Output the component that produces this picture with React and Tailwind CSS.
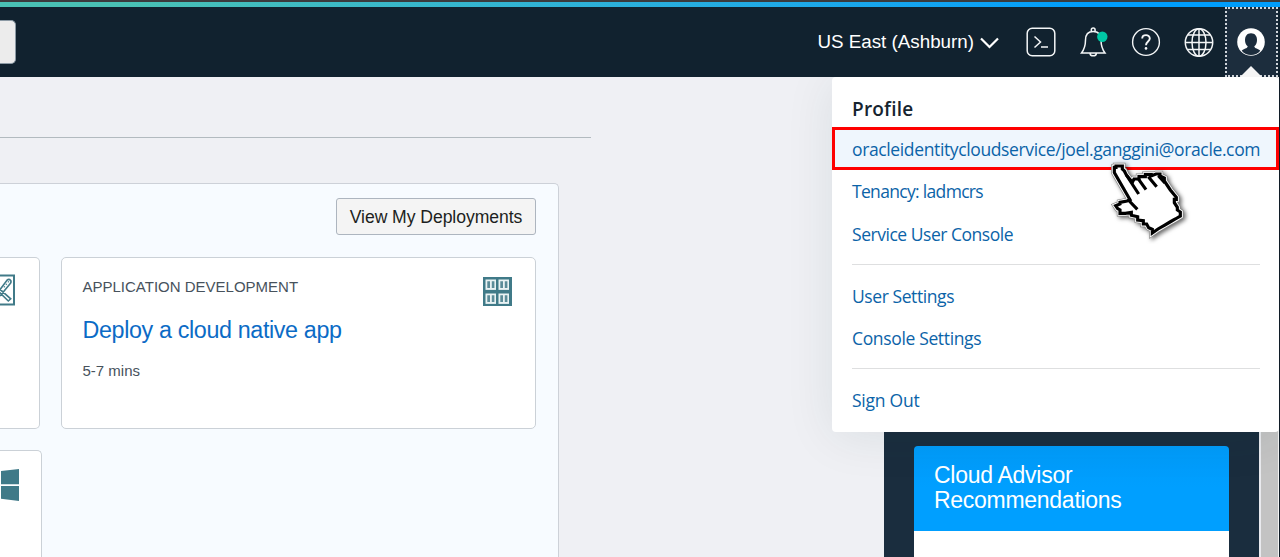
import React from "react";

const links = "flex items-center whitespace-nowrap px-5 text-[17.5px] text-[#0b63a8]";

function Header() {
  return (
    <header className="flex h-[77px] flex-col">
      <div className="h-[2px] bg-[#3b3b3d]" />
      <div className="h-[5px] bg-linear-to-r from-[#49c1b4] from-10% via-[#2aafdc] via-50% to-[#009dfb] to-85%" />
      <div className="flex h-[70px] items-center bg-[#11222f]">
        <div className="h-11 w-4 rounded-r-[5px] border border-l-0 border-[#8c9aa5] bg-[#ececec]" />
        <div className="ml-auto flex h-full items-center">
          <span className="whitespace-nowrap text-[18.8px] leading-none text-white">US East (Ashburn)</span>
          <svg className="ml-[6px] mt-[2px] h-3 w-[19px]" viewBox="0 0 19 12" fill="none" stroke="#fff" strokeWidth="2.2">
            <path d="M1 1.5L9.5 10L18 1.5" />
          </svg>
          <svg className="ml-[27px] h-[30px] w-[30px]" viewBox="0 0 30 30" fill="none" stroke="#f4f6f7" strokeWidth="1.5">
            <rect x="1.2" y="1.2" width="27.6" height="27.6" rx="5" />
            <path d="M8.5 9.5L14.5 15L8.5 20.5M15 20H22" />
          </svg>
          <svg className="ml-[24px] h-[30px] w-[28px]" viewBox="0 0 28 30" fill="none" stroke="#f4f6f7" strokeWidth="1.5">
            <path d="M11.3 4.2V3A1.9 1.9 0 0 1 15.1 3V4.2M1.5 26H25C22 22 21 19 21 13C21 7.5 18.5 4.5 13.2 4.5C8 4.5 5.5 7.5 5.5 13C5.5 19 4.5 22 1.5 26ZM10 26.3C10.4 29.7 16 29.7 16.4 26.3" />
            <circle cx="22.3" cy="9.8" r="5.2" fill="#00c7a5" stroke="none" />
          </svg>
          <svg className="ml-[23px] h-[30px] w-[30px]" viewBox="0 0 30 30" fill="none" stroke="#f4f6f7" strokeWidth="1.4">
            <circle cx="15" cy="15" r="13.4" />
            <path strokeWidth="1.9" d="M11.2 11.5C11.2 7 18.8 7 18.8 11.4C18.8 14.4 15 14.6 15 18.2" />
            <circle cx="15" cy="21.4" r="1.3" fill="#f4f6f7" stroke="none" />
          </svg>
          <svg className="ml-[23px] h-[30px] w-[30px]" viewBox="0 0 30 30" fill="none" stroke="#f4f6f7" strokeWidth="1.5">
            <circle cx="15" cy="15.5" r="13.7" />
            <ellipse cx="15" cy="15.5" rx="7" ry="13.7" />
            <path d="M15 1.8V29.2M1.3 15.5H28.7M3.8 8H26.2M3.8 22.5H26.2" />
          </svg>
          <div className="ml-[11px] flex h-full w-[53px] items-center justify-center border-2 border-dotted border-[#d0d5da] bg-[#1c2d3d] pr-px">
            <svg className="h-7 w-7" viewBox="0 0 28 28">
              <circle cx="14" cy="14" r="13.8" fill="#fff" />
              <path d="M14 5.2C18 5.2 20 8.1 20 12C20 14.8 19 17 17.3 18.3C17.5 20.8 21.5 20.6 23.3 22.7C20.8 25.6 17.7 27 14 27C10.3 27 7.2 25.6 4.7 22.7C6.5 20.6 10.5 20.8 10.7 18.3C9 17 8 14.8 8 12C8 8.1 10 5.2 14 5.2Z" fill="#1c2d3d" />
            </svg>
          </div>
          <div className="w-[2px]" />
        </div>
      </div>
    </header>
  );
}

function DesignIcon() {
  return (
    <svg className="h-8 w-[15px]" viewBox="0 0 15 32" fill="none" stroke="#407a88">
      <path strokeWidth="2" d="M0 1.5H14V30.5H0" />
      <path strokeWidth="1.6" d="M-1 17L7 6.2Q9 4.5 10.7 6.5Q11.5 8 10.3 9.4L0 22M-1 14.5L10.7 24.8L8.3 27L-1 18M8 7.5L8.8 8.2M6 10L6.8 10.7M4 12.5L4.8 13.2" />
    </svg>
  );
}

function WindowsIcon() {
  return (
    <svg className="h-8 w-[19px]" viewBox="0 0 19 32" fill="#407a88">
      <path d="M1 2L19 0V15.2H1ZM1 17H19V32L1 29.7Z" />
    </svg>
  );
}

function ContainersIcon() {
  const cells = [[3, 3], [16, 3], [3, 17], [16, 17]];
  return (
    <svg className="h-[29px] w-[29px]" viewBox="0 0 29 29">
      <path d="M0 0H29V29H0Z" fill="#407a88" />
      {cells.map(([x, y]) => (
        <g key={x + "-" + y} transform={"translate(" + x + " " + y + ")"}>
          <path d="M-.5 -.5H10V9.9H-.5Z" fill="#e9f2f3" />
          <path d="M1.3 1.3H4V8H1.3ZM5.8 1.3H8.4V8H5.8Z" fill="#5b8c98" />
        </g>
      ))}
    </svg>
  );
}

function Deployments() {
  return (
    <section className="h-[374px] w-[559px] rounded-tr-[5px] border-t border-r border-[#cdd1d8] bg-[#f7fbff] pt-[14px]">
      <div className="flex justify-end pr-[22px]">
        <button className="h-[37px] w-[200px] whitespace-nowrap rounded-[3px] border border-[#adb5bf] bg-[#f4f4f4] pt-[2px] text-[17.6px] leading-none tracking-[-0.06px] text-[#1d1f21]">
          View My Deployments
        </button>
      </div>
      <div className="mt-[22px] flex gap-[21px]">
        <div className="flex h-[172px] w-10 justify-start rounded-r-[5px] border border-l-0 border-[#cbd1d7] bg-white pt-4">
          <DesignIcon />
        </div>
        <article className="flex h-[172px] w-[475px] justify-between rounded-[5px] border border-[#cbd1d7] bg-white pt-[19px] pr-[23px] pl-[20.5px]">
          <div className="whitespace-nowrap">
            <p className="text-[15px] leading-[20px] text-[#47525c]">APPLICATION DEVELOPMENT</p>
            <h3 className="mt-[18px] text-[23.3px] leading-[30px] tracking-[-0.36px] text-[#0b6bc6]">Deploy a cloud native app</h3>
            <p className="mt-[16px] text-[15px] leading-[20px] text-[#47525c]">5-7 mins</p>
          </div>
          <ContainersIcon />
        </article>
      </div>
      <div className="mt-[21px] h-[108px] w-[42px] rounded-tr-[5px] border-t border-r border-[#cbd1d7] bg-white pt-[18px]">
        <WindowsIcon />
      </div>
    </section>
  );
}

function Advisor() {
  return (
    <aside className="flex h-full w-[396px]">
      <div className="flex w-[375px] flex-col bg-[#1a2d3e] px-[30px] pt-[369px]">
        <div className="h-[85px] rounded-t-[4px] bg-linear-to-b from-[#009bf9] to-[#009fff] to-50% pt-[17px] pl-5 text-[23px] leading-[25px] tracking-[-0.28px] text-white">
          Cloud Advisor
          <br />
          Recommendations
        </div>
        <div className="flex-1 bg-white" />
      </div>
      <div className="w-[2px] bg-[#e9eaee]" />
      <div className="w-[17px] bg-[#c3c3c3]" />
      <div className="w-px bg-[#f4f4f4]" />
      <div className="w-px bg-[#101c27]" />
    </aside>
  );
}

function PointerHand() {
  const outline =
    "M193 147V142H198V138H217V147L223 153L229 165L247 187L252 177H267V170H286V164H303V168L318 162H330V168L343 174V183L355 201L361 210L379 232V238H373V248L382 262V270L391 276V288L376 297L360 306L343 316L324 327L307 339V328L296 323L290 312H280V302L263 300V290L244 286V277L226 280H210V270L203 266L197 257L210 252V247L231 243L240 239L193 158Z";
  return (
    <svg className="absolute top-[160px] left-[1108px] h-[84px] w-[84px]" viewBox="174 120 252 252" strokeLinejoin="miter">
      <g style={{ filter: "drop-shadow(6px 5px 6px rgba(0,0,0,.6))" }}>
        <path d={outline} fill="#fff" stroke="#8a8a8a" strokeWidth="19" />
        <path d={outline} fill="#fff" stroke="#fff" strokeWidth="15" />
        <path d={outline} fill="#fff" stroke="#000" strokeWidth="9.5" />
      </g>
      <path d="M235 240L262 268M229 165L266 222M266 178L288 209M295 170L320 200M325 167L345 189" fill="none" stroke="#000" strokeWidth="9.5" />
    </svg>
  );
}

function ProfileMenu() {
  return (
    <>
      <svg className="absolute top-[66px] left-[1240px] h-[11px] w-[22px]" viewBox="0 0 22 11">
        <path d="M0 11L11 0L22 11Z" fill="#f5f5f5" />
      </svg>
      <nav className="absolute top-[77px] left-[832px] h-[355px] w-[447px] rounded-[4px] bg-white pt-[12px] font-['Open_Sans',sans-serif] shadow-[0_4px_50px_rgba(26,55,58,0.09)] [clip-path:inset(0_0_-80px_-80px)]">
        <h2 className="flex h-[38px] items-center px-5 pt-[3px] text-[19px] font-semibold tracking-[0.2px] text-[#16242f]">Profile</h2>
        <a className="flex h-[43px] w-[447px] items-center whitespace-nowrap border-[3px] border-[#ff0000] bg-[#eff6fd] pt-[2px] pl-[17px] text-[17.5px] tracking-[-0.37px] text-[#0b63a8]">
          oracleidentitycloudservice/joel.ganggini@oracle.com
        </a>
        <a className={links + " h-[43px] tracking-[-0.68px]"}>Tenancy: ladmcrs</a>
        <a className={links + " h-[43px] tracking-[-0.47px]"}>Service User Console</a>
        <div className="mt-[8px] mr-[19px] mb-[10px] ml-5 h-px bg-[#dedfe0]" />
        <a className={links + " h-[42px] tracking-[-0.42px]"}>User Settings</a>
        <a className={links + " h-[42px] tracking-[-0.35px]"}>Console Settings</a>
        <div className="mt-[9px] mr-[19px] mb-[10px] ml-5 h-px bg-[#dedfe0]" />
        <a className={links + " h-[42px] tracking-[-0.25px]"}>Sign Out</a>
      </nav>
    </>
  );
}

export default function App() {
  return (
    <div className="relative h-[557px] w-[1280px] overflow-hidden bg-[#eff0f4] font-['Liberation_Sans',sans-serif]">
      <Header />
      <main className="flex h-[480px] justify-between">
        <div>
          <div className="h-[61px] w-[591px] border-b border-[#b2babf]" />
          <div className="h-[45px]" />
          <Deployments />
        </div>
        <Advisor />
      </main>
      <ProfileMenu />
      <PointerHand />
    </div>
  );
}
